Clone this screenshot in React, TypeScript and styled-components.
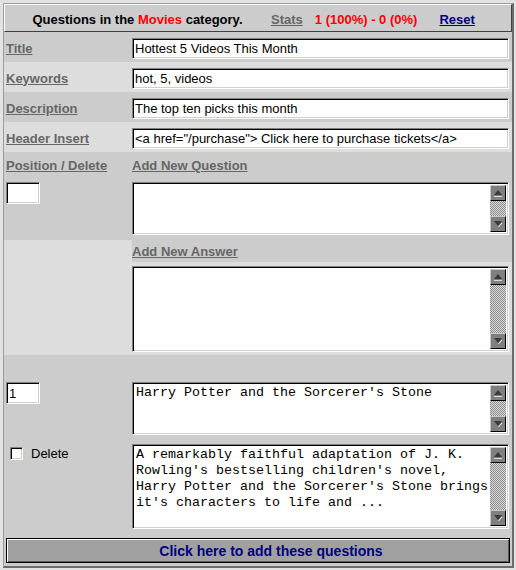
import React from 'react'
import styled, { createGlobalStyle } from 'styled-components'

const GlobalStyle = createGlobalStyle`
  body {
    margin: 0;
    background: #e2e2e2;
    font-family: "Liberation Sans", Arial, sans-serif;
  }
`

const Frame = styled.div`
  margin: 3px 0 0 3px;
  width: 508px;
  display: grid;
  grid-template-columns: 128px 380px;
  grid-template-rows: 28px repeat(4, 30px) 26px 62px 22px 93px 23px 62px 93px 33px;
  border-left: 1px solid #9c9c9c;
  border-top: 1px solid #9c9c9c;
  border-right: 2px solid #6c6c6c;
  border-bottom: 2px solid #6c6c6c;
  background: #cccccc;
`

const HeaderBar = styled.div`
  grid-column: 1 / -1;
  display: flex;
  align-items: center;
  padding-top: 2px;
  background: #cccccc;
  border-top: 1px solid #ffffff;
  border-left: 1px solid #ffffff;
  border-bottom: 1px solid #404040;
  border-right: 1px solid #404040;
  font-size: 13px;
  font-weight: bold;
`

const HeadTitle = styled.div`
  width: 265px;
  text-align: center;
  color: #000;
`

const StatsCell = styled.div`
  display: flex;
  gap: 12px;
  padding-left: 1px;
`

const ResetCell = styled.div`
  flex: 1;
  text-align: center;
  padding-right: 14px;
`

const Red = styled.span`
  color: #ff0000;
`

const Link = styled.a<{ $color: string }>`
  color: ${({ $color }) => $color};
  text-decoration: underline;
  cursor: pointer;
`

const Cell = styled.div<{ $light?: boolean; $span?: number; $top?: boolean; $pad?: string; $wide?: boolean }>`
  display: flex;
  align-items: ${({ $top }) => ($top ? 'flex-start' : 'center')};
  padding: ${({ $pad }) => $pad || '0 0 0 2px'};
  background: ${({ $light }) => ($light ? '#dddddd' : '#cccccc')};
  ${({ $span }) => ($span ? `grid-row: span ${$span};` : '')}
  ${({ $wide }) => ($wide ? 'grid-column: 1 / -1;' : '')}
  box-sizing: border-box;
`

const FieldLabel = styled.span`
  font-size: 13px;
  font-weight: bold;
  color: #666666;
  text-decoration: underline;
`

const sunken = `
  border: 1px solid;
  border-color: #808080 #ffffff #ffffff #808080;
  box-shadow: inset 1px 1px 0 #000000, inset -1px -1px 0 #d4d0c8;
  background: #ffffff;
  box-sizing: border-box;
`

const TextInput = styled.input<{ $width?: number }>`
  ${sunken}
  width: ${({ $width }) => $width || 377}px;
  height: ${({ $width }) => ($width ? 22 : 21)}px;
  padding: 0 2px;
  margin: 0;
  font-family: "Liberation Sans", Arial, sans-serif;
  font-size: 13px;
  color: #000;
  outline: none;
`

const Memo = styled.div<{ $h: number }>`
  ${sunken}
  width: 377px;
  height: ${({ $h }) => $h}px;
  padding: 2px;
  display: flex;
`

const MemoText = styled.textarea`
  flex: 1;
  border: none;
  outline: none;
  resize: none;
  overflow: hidden;
  margin: 0;
  padding: 0 0 0 1px;
  font-family: "Liberation Mono", "Courier New", monospace;
  font-size: 13.333px;
  line-height: 16px;
  color: #000;
  background: transparent;
`

const Scrollbar = styled.div`
  width: 16px;
  display: flex;
  flex-direction: column;
`

const ScrollButton = styled.div`
  width: 16px;
  height: 16px;
  box-sizing: border-box;
  background: #808080;
  border-top: 1px solid #c8c8c8;
  border-left: 1px solid #c8c8c8;
  border-right: 1px solid #000000;
  border-bottom: 1px solid #000000;
  display: flex;
  align-items: center;
  justify-content: center;
`

const Track = styled.div`
  flex: 1;
  background: repeating-conic-gradient(#8c8c8c 0% 25%, #dadada 0% 50%) 0 0 / 2px 2px;
`

const CheckRow = styled.label`
  display: flex;
  align-items: center;
  gap: 8px;
  font-size: 13px;
  color: #000;
`

const Check = styled.span`
  ${sunken}
  display: inline-block;
  width: 13px;
  height: 13px;
`

const SubmitButton = styled.button`
  width: 504px;
  height: 25px;
  margin: 0;
  border: 1px solid #000000;
  box-shadow: inset 1px 1px 0 #ffffff, inset -1px -1px 0 #5a5a5a;
  background: #a0a0a0;
  padding: 0 0 0 26px;
  font-family: "Liberation Sans", Arial, sans-serif;
  font-size: 14px;
  font-weight: bold;
  color: #000080;
  text-align: center;
  cursor: pointer;
`

function ScrollArrow({ down }: { down?: boolean }) {
  return (
    <svg width="10" height="10" viewBox="0 0 10 10">
      {down ? (
        <>
          <polygon points="1,2 9,2 5,7" fill="#3a3a3a" />
          <line x1="5.5" y1="8" x2="9" y2="4" stroke="#f0f0f0" strokeWidth="1" />
        </>
      ) : (
        <>
          <polygon points="1,7 5,2 9,7" fill="#3a3a3a" />
          <line x1="1" y1="8.5" x2="9" y2="8.5" stroke="#d8d8d8" strokeWidth="1" />
        </>
      )}
    </svg>
  )
}

function TextBox({ height, value }: { height: number; value?: string }) {
  return (
    <Memo $h={height}>
      <MemoText defaultValue={value} spellCheck={false} />
      <Scrollbar>
        <ScrollButton>
          <ScrollArrow />
        </ScrollButton>
        <Track />
        <ScrollButton>
          <ScrollArrow down />
        </ScrollButton>
      </Scrollbar>
    </Memo>
  )
}

const fields = [
  { label: 'Title', value: 'Hottest 5 Videos This Month' },
  { label: 'Keywords', value: 'hot, 5, videos' },
  { label: 'Description', value: 'The top ten picks this month' },
  { label: 'Header Insert', value: '<a href="/purchase"> Click here to purchase tickets</a>' },
]

const answerText =
  "A remarkably faithful adaptation of J. K.\nRowling's bestselling children's novel,\nHarry Potter and the Sorcerer's Stone brings\nit's characters to life and ..."

export default function App() {
  return (
    <>
      <GlobalStyle />
      <Frame>
        <HeaderBar>
          <HeadTitle>
            Questions in the <Red>Movies</Red> category.
          </HeadTitle>
          <StatsCell>
            <Link $color="#666666">Stats</Link>
            <Red>1 (100%) - 0 (0%)</Red>
          </StatsCell>
          <ResetCell>
            <Link $color="#000080">Reset</Link>
          </ResetCell>
        </HeaderBar>

        {fields.map((f, i) => (
          <React.Fragment key={f.label}>
            <Cell $light={i % 2 === 1} $pad="2px 0 0 2px">
              <FieldLabel>{f.label}</FieldLabel>
            </Cell>
            <Cell $light={i % 2 === 1} $pad="2px 0 0 0">
              <TextInput defaultValue={f.value} spellCheck={false} />
            </Cell>
          </React.Fragment>
        ))}

        <Cell>
          <FieldLabel>Position / Delete</FieldLabel>
        </Cell>
        <Cell $pad="0">
          <FieldLabel>Add New Question</FieldLabel>
        </Cell>

        <Cell $top $pad="4px 0 0 2px">
          <TextInput $width={34} />
        </Cell>
        <Cell $top $pad="4px 0 0 0">
          <TextBox height={53} />
        </Cell>

        <Cell $light $span={2} />
        <Cell $pad="0">
          <FieldLabel>Add New Answer</FieldLabel>
        </Cell>
        <Cell $light $top $pad="4px 0 0 0">
          <TextBox height={86} />
        </Cell>

        <Cell />
        <Cell />

        <Cell $top $pad="4px 0 0 2px">
          <TextInput $width={34} defaultValue="1" />
        </Cell>
        <Cell $top $pad="4px 0 0 0">
          <TextBox height={53} value="Harry Potter and the Sorcerer's Stone" />
        </Cell>

        <Cell $top $pad="6px 0 0 6px">
          <CheckRow>
            <Check />
            Delete
          </CheckRow>
        </Cell>
        <Cell $top $pad="4px 0 0 0">
          <TextBox height={85} value={answerText} />
        </Cell>

        <Cell $wide $top $pad="5px 0 0 2px">
          <SubmitButton>Click here to add these questions</SubmitButton>
        </Cell>
      </Frame>
    </>
  )
}
